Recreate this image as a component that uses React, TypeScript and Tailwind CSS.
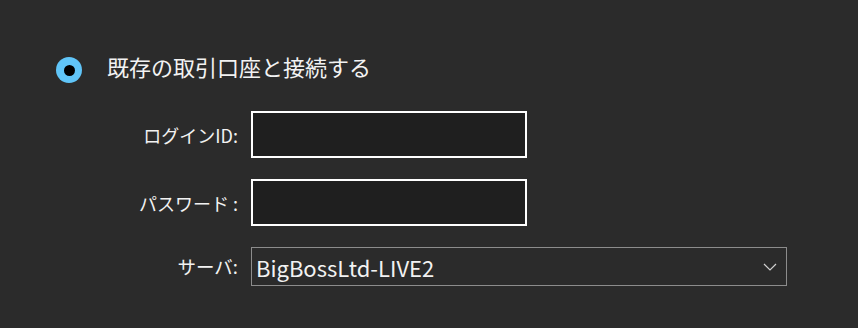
import React, { useState } from "react"

const font = {
  fontFamily: '"Noto Sans CJK JP", "Noto Sans", sans-serif'
}

function App() {

  const [login, setLogin] = useState("")
  const [password, setPassword] = useState("")

  return (
    <div
      className="w-[858px] h-[328px] bg-[#2b2b2b] text-[#f2f2f2] overflow-hidden"
      style={font}
    >

      {/* RADIO OPTION */}
      <div className="flex items-center pt-[57px] pl-[56px]">

        <div className="w-[26px] h-[26px] rounded-full bg-[#60c5f8] flex items-center justify-center">

          <div className="w-[11px] h-[11px] rounded-full bg-black"></div>

        </div>

        <span className="ml-[25px] text-[22px] leading-[28px] -mt-[9px]">
          既存の取引口座と接続する
        </span>

      </div>

      {/* FORM */}
      <div className="mt-[28px] grid grid-cols-[238px_auto] gap-x-[13px] gap-y-[21px] items-center">

        <label className="text-right text-[18px] leading-none">
          ログインID:
        </label>

        <input
          type="text"
          value={login}
          onChange={(e) => setLogin(e.target.value)}
          className="w-[276px] h-[47px] bg-[#1f1f1f] border-2 border-white outline-none px-2 text-[18px]"
        />

        <label className="text-right text-[18px] leading-none">
          パスワード :
        </label>

        <input
          type="password"
          value={password}
          onChange={(e) => setPassword(e.target.value)}
          className="w-[276px] h-[47px] bg-[#1f1f1f] border-2 border-white outline-none px-2 text-[18px]"
        />

        <label className="text-right text-[18.5px] leading-none">
          サーバ:
        </label>

        <div className="w-[536px] h-[39px] border border-[#8c8c8c] flex items-center justify-between pl-[4px] pr-[9px]">

          <span className="text-[22px] leading-none">
            BigBossLtd-LIVE2
          </span>

          <svg width="14" height="8" viewBox="0 0 14 8" fill="none">
            <path d="M1 1 L7 7 L13 1" stroke="#d0d0d0" strokeWidth="1.2" />
          </svg>

        </div>

      </div>

    </div>
  )
}

export default App
